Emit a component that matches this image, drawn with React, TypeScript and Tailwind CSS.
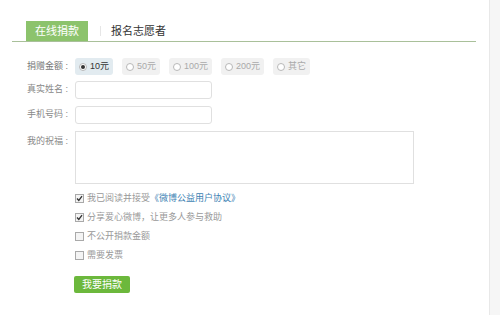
const amounts = ["10元", "50元", "100元", "200元", "其它"];

const checks = [
  { label: "我已阅读并接受", link: "《微博公益用户协议》", checked: true },
  { label: "分享爱心微博，让更多人参与救助", checked: true },
  { label: "不公开捐款金额", checked: false },
  { label: "需要发票", checked: false },
];

function Radio({ on }: { on: boolean }) {
  return (
    <span className="inline-flex h-[8px] w-[8px] items-center justify-center rounded-full border border-[#b8b8b8] bg-white">
      {on && <span className="h-[4px] w-[4px] rounded-full bg-[#333]" />}
    </span>
  );
}

function Check({ on }: { on: boolean }) {
  return (
    <span className="inline-flex h-[9px] w-[9px] items-center justify-center border border-[#a9a9a9] bg-[#f4f4f4]">
      {on && (
        <svg width="7" height="7" viewBox="0 0 7 7">
          <path d="M1 3.5 L2.8 5.5 L6 1.2" stroke="#333" strokeWidth="1.3" fill="none" />
        </svg>
      )}
    </span>
  );
}

export default function App() {
  return (
    <div
      className="flex h-[315px] w-[500px] bg-white text-[9px] text-[#666]"
      style={{ fontFamily: '"Liberation Sans", "Noto Sans CJK SC", sans-serif' }}
    >
      <div className="flex-1 pl-[12px] pr-[13px] pt-[21px]">
        <div className="flex items-end border-b border-[#a9c09a] pl-[14px]">
          <div className="flex h-[20px] w-[62px] items-center justify-center bg-[#8cc36c] text-[11px] text-white">
            在线捐款
          </div>
          <div className="mb-[5px] ml-[12px] h-[10px] w-px bg-[#e6e6e6]" />
          <div className="flex h-[20px] items-center pl-[10px] text-[11px] text-[#333]">报名志愿者</div>
        </div>

        <div className="mt-[16px] flex flex-col pl-[15px]">
          <div className="flex items-center">
            <span className="w-[48px] text-[#777]">捐赠金额 :</span>
            <div className="flex gap-[9px]">
              {amounts.map((a, i) => (
                <div
                  key={a}
                  className={`flex h-[17px] items-center gap-[3px] rounded-[3px] px-[4px] ${
                    i === 0 ? "bg-[#e2ebf0] text-[#333]" : "bg-[#f1f1f1] text-[#aaa]"
                  }`}
                >
                  <Radio on={i === 0} />
                  <span>{a}</span>
                </div>
              ))}
            </div>
          </div>

          <div className="mt-[6px] flex items-center">
            <span className="w-[48px] text-[#888]">真实姓名 :</span>
            <div className="h-[18px] w-[137px] rounded-[3px] border border-[#e0e0e0]" />
          </div>

          <div className="mt-[7px] flex items-center">
            <span className="w-[48px] text-[#888]">手机号码 :</span>
            <div className="h-[18px] w-[137px] rounded-[3px] border border-[#e0e0e0]" />
          </div>

          <div className="mt-[7px] flex items-start">
            <span className="mt-[4px] w-[48px] text-[#888]">我的祝福 :</span>
            <div className="h-[53px] w-[339px] border border-[#e0e0e0]" />
          </div>

          <div className="ml-[48px] mt-[9px] flex flex-col gap-[8px]">
            {checks.map((c) => (
              <div key={c.label} className="flex h-[11px] items-center gap-[3px] text-[#999]">
                <Check on={c.checked} />
                <span>
                  {c.label}
                  {c.link && <span className="text-[#3d7fb3]">{c.link}</span>}
                </span>
              </div>
            ))}
          </div>

          <div className="ml-[47px] mt-[15px]">
            <button className="flex h-[17px] w-[56px] items-center justify-center rounded-[2px] bg-[#6cb83c] text-[10px] text-white">
              我要捐款
            </button>
          </div>
        </div>
      </div>
      <div className="w-[11px] border-l border-[#e8e8e8] bg-[#f6f6f6]" />
    </div>
  );
}
